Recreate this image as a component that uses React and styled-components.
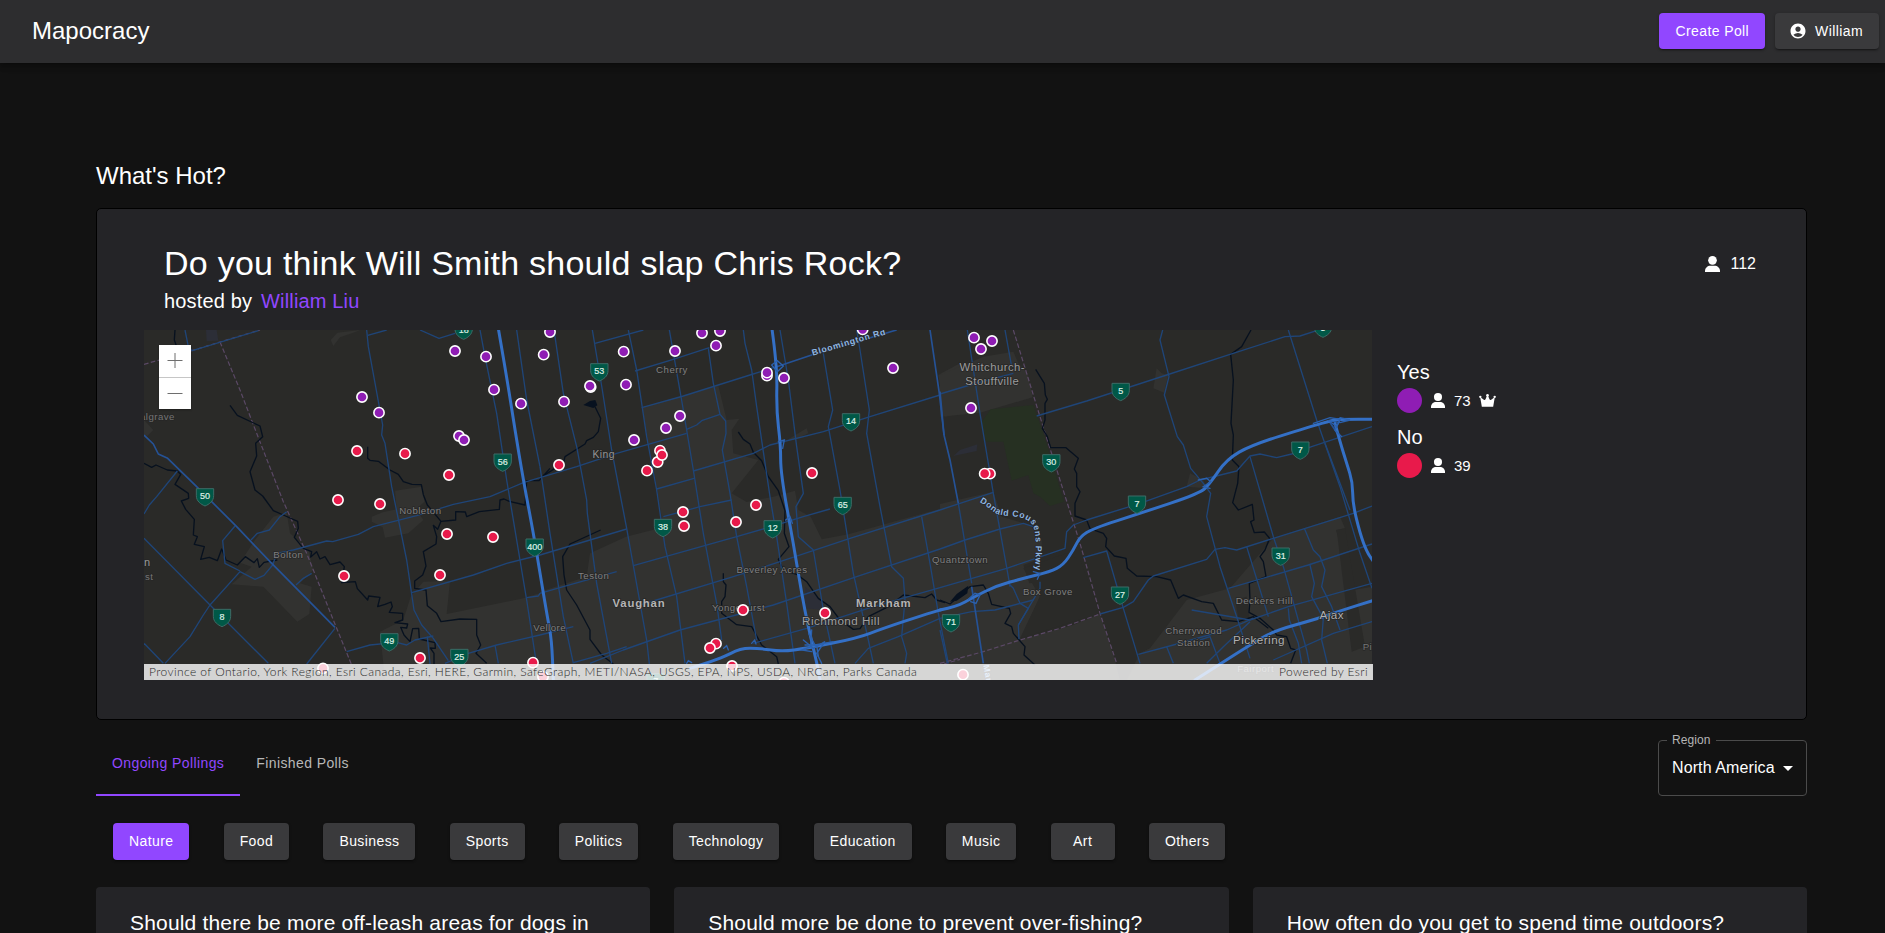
import React from "react";
import styled, { createGlobalStyle } from "styled-components";
import { MdAccountCircle, MdArrowDropDown } from "react-icons/md";

const GlobalStyle = createGlobalStyle`
  * { box-sizing: border-box; }
  html, body { margin: 0; height: 100%; overflow: hidden; background: #121212; }
  body { color: #fff; font-family: Arial, "Liberation Sans", sans-serif; }
`;

const Page = styled.div`
  height: 100vh;
  overflow: hidden;
  display: flex;
  flex-direction: column;
`;

const NavBar = styled.header`
  flex: none;
  height: 63px;
  display: flex;
  align-items: center;
  gap: 10px;
  padding: 0 6px 1px 32px;
  background: #2d2d2f;
  box-shadow: 0 2px 4px -1px rgba(0, 0, 0, 0.2), 0 4px 5px rgba(0, 0, 0, 0.14), 0 1px 10px rgba(0, 0, 0, 0.12);
`;

const Brand = styled.div`
  flex: 1;
  font-size: 24px;
  line-height: 32px;
`;

const Button = styled.button`
  display: inline-flex;
  align-items: center;
  justify-content: center;
  min-width: 64px;
  height: 36px;
  padding: 0 16px;
  border: 0;
  border-radius: 4px;
  color: #fff;
  background: ${(p) => (p.$primary ? "#9147ff" : "#3a3a3c")};
  font: 14px/24px Arial, "Liberation Sans", sans-serif;
  letter-spacing: 0.4px;
  white-space: nowrap;
  box-shadow: 0 2px 2px -1px rgba(0, 0, 0, 0.4), 0 1px 3px rgba(0, 0, 0, 0.25);
`;

const AccountButton = styled(Button)`
  gap: 8px;
  padding-left: 14px;
`;

const CategoryButton = styled(Button)`
  height: 37px;
  padding-bottom: 1px;
`;

const Content = styled.main`
  flex: none;
  padding: 97px 78px 0 96px;
`;

const SectionTitle = styled.h2`
  margin: 0;
  font-size: 24px;
  line-height: 32px;
  font-weight: 400;
`;

const HotCard = styled.section`
  height: 512px;
  margin-top: 16px;
  padding: 33px 49px 0 47px;
  background: #242427;
  border: 1px solid #000;
  border-radius: 5px;
`;

const HotHeader = styled.div`
  display: flex;
  justify-content: space-between;
  padding: 0 1px 0 20px;
`;

const Question = styled.h1`
  margin: 0;
  font-size: 34px;
  line-height: 42px;
  font-weight: 400;
  letter-spacing: 0.25px;
`;

const HostLine = styled.div`
  display: flex;
  gap: 9px;
  padding-top: 1px;
  font-size: 20px;
  line-height: 32px;
  letter-spacing: 0.15px;
`;

const Accent = styled.span`
  color: #9147ff;
`;

const Total = styled.div`
  display: flex;
  align-items: center;
  gap: 10px;
  height: 44px;
  font-size: 16px;
`;

const HotBody = styled.div`
  display: flex;
  margin-top: 13px;
`;

const MapFrame = styled.div`
  position: relative;
  width: 1229px;
  height: 350px;
  svg { display: block; }
`;

const ZoomPad = styled.div`
  position: absolute;
  left: 15px;
  top: 15px;
  width: 32px;
  height: 64px;
  background: #fff;
  display: flex;
  flex-direction: column;
  box-shadow: 0 1px 2px rgba(0, 0, 0, 0.3);
`;

const ZoomKey = styled.div`
  height: 32px;
  display: grid;
  place-items: center;
  & + & { border-top: 1px solid #c6c6c6; }
`;

const Attribution = styled.div`
  position: absolute;
  left: 0;
  right: 0;
  bottom: 0;
  height: 16px;
  padding: 0 5px;
  display: flex;
  justify-content: space-between;
  background: rgba(255, 255, 255, 0.8);
  color: #2a2a2a;
  font: 300 12px/16px Lato, sans-serif;
  letter-spacing: 0.4px;
`;

const Legend = styled.div`
  padding: 29px 0 0 24px;
`;

const LegendEntry = styled.div`
  height: 65px;
`;

const LegendName = styled.div`
  font-size: 20px;
  line-height: 26px;
  height: 29px;
`;

const LegendRow = styled.div`
  display: flex;
  align-items: center;
  font-size: 15px;
  line-height: 25px;
  svg + span { margin: 0 8px 0 9px; }
`;

const Swatch = styled.i`
  width: 25px;
  height: 25px;
  border-radius: 50%;
  margin-right: 9px;
  background: ${(p) => p.$color};
`;

const FilterBar = styled.div`
  display: flex;
  justify-content: space-between;
  align-items: flex-end;
  height: 76px;
`;

const Tabs = styled.div`
  display: flex;
`;

const Tab = styled.div`
  height: 62px;
  padding: 17px 16px 0;
  font-size: 14px;
  line-height: 24px;
  letter-spacing: 0.4px;
  color: ${(p) => (p.$active ? "#9147ff" : "#b8b8b8")};
  border-bottom: 2px solid ${(p) => (p.$active ? "#9147ff" : "transparent")};
`;

const Select = styled.fieldset`
  width: 149px;
  height: 63px;
  margin: 0;
  padding: 0 6px 0 8px;
  border: 1px solid #4b4b4b;
  border-radius: 4px;
  legend {
    padding: 0 5px;
    font-size: 12px;
    line-height: 14px;
    letter-spacing: 0.1px;
    color: #b5b5b5;
  }
`;

const SelectValue = styled.div`
  display: flex;
  align-items: center;
  justify-content: space-between;
  height: 24px;
  margin-top: 9px;
  padding-left: 5px;
  font-size: 16px;
  letter-spacing: 0.1px;
  white-space: nowrap;
`;

const Categories = styled.div`
  display: flex;
  gap: 34.25px;
  padding: 27px 0 0 17px;
`;

const PollGrid = styled.div`
  display: grid;
  grid-template-columns: repeat(3, 1fr);
  gap: 24px;
  margin-top: 27px;
`;

const PollCard = styled.article`
  height: 240px;
  padding: 20px 34px;
  background: #242427;
  border-radius: 4px;
  font-size: 21px;
  line-height: 32px;
  letter-spacing: 0.18px;
  white-space: nowrap;
`;

const Person = ({ size }) => (
  <svg width={size} height={size * 1.07} viewBox="0 0 45 48" fill="#fff">
    <circle cx="22.5" cy="13" r="13" />
    <path d="M0 48V45C0 35 8 29 16 29H29C37 29 45 35 45 45V48Z" />
  </svg>
);

const Crown = () => (
  <svg width="17" height="13" viewBox="0 0 50 39" fill="#fff">
    <path d="M8 38.5L3 9L14 17Q17 19 19 16L24 4H26L31 16Q33 19 36 17L47 9L42 38.5Z" />
    <circle cx="3.5" cy="8.5" r="3.5" />
    <circle cx="25" cy="4" r="4" />
    <circle cx="46.5" cy="8.5" r="3.5" />
  </svg>
);

/* The map is drawn in three sheets, three drawing units to a pixel. */
const SHEETS = [
  {
    x: 0,
    urban: [
      "572,60 592,38 660,30 640,38 600,52 580,78",
      "765,512 845,500 853,545 828,568 850,600 805,640 735,653 728,622 695,605 695,590 728,577 770,568",
      "275,793 335,740 300,728 345,660 400,590 440,578 450,640 505,690 520,750 480,790 515,800 508,882 472,905 370,800",
      "720,935 790,900 812,830 850,785 930,783 920,882 1150,835 1260,800 1260,1080 735,1080",
      "12,300 40,330 22,348 12,345",
    ],
    lake: ["198,30 230,30 235,62 200,64"],
    river: [
      "105,30 103,60 110,80",
      "270,256 292,286 360,318 368,350 347,370 350,408 330,455 345,510 368,528 400,572 430,585 473,604 475,625 463,652 490,685 515,695 512,711 530,695 540,717 555,710 570,734 600,726 613,740 605,788 646,785 652,806 683,840 686,828 720,832 713,860 735,853 753,846 757,860 748,877 788,880 788,900 765,908 803,912 800,924 782,922 792,945 810,965 818,926 836,925 838,957 885,968 886,985 871,984 882,1000 882,1032",
      "12,430 35,442 48,435 82,450 112,453 122,463 105,493 145,520 146,535 124,543 137,568 163,598 160,645 172,650 163,673 193,680 182,718 208,712 232,722 245,687 258,720 292,735 316,710 342,728 352,716 358,742 372,727 412,720",
      "683,380 683,415 690,421 715,424 750,450 775,463 790,485 816,493 844,494 850,524 862,555 903,604 947,600 947,575 976,576 980,590 1018,575 1078,568 1080,540 1092,537 1108,544 1155,555 1160,482 1197,482 1230,445",
      "903,604 893,628 880,616 890,650 888,672 850,695 858,738 848,765 824,783 824,805 858,810 862,857 890,880 903,905 960,897 1010,898 1010,945 1022,975 1008,1000 1040,1030",
    ],
    road: [
      "135,30 145,80 157,92 355,32",
      "680,30 685,80 728,315 725,345 735,370 755,500 800,720 822,870 845,915 880,955 925,1022",
      "683,46 740,30", "840,30 897,55 945,40",
      "1020,30 1035,110 1070,280 1100,480 1160,840 1190,1035",
      "1130,30 1160,240 1200,440",
      "12,582 28,555 50,530 112,453",
      "12,655 210,855 385,1030", "12,970 70,1030", "75,1030 150,950 190,885 210,855 300,755 345,778 372,766 398,735 410,700 460,690 560,663 578,665 655,643 700,620 830,587 940,553 1050,530 1150,488 1200,473",
      "285,618 248,662 255,730 300,753", "440,575 420,590 388,630 352,640 333,660", "468,795 490,775 515,760",
      "500,1032 585,925", "620,995 690,975 770,967 800,975 825,960 880,948",
      "815,818 1000,765 1100,730 1200,705",
      "915,1030 985,1000 1070,975 1200,945", "1065,975 1075,1030", "862,950 870,1032", "1160,833 1195,828 1200,820",
    ],
    major: ["12,345 40,372 55,402 83,415 170,500 290,620 390,725 585,922"],
    highway: ["1074,20 1100,170 1125,330 1150,480 1182,650 1200,760 1222,890 1235,960 1240,1080"],
    border: ["12,133 130,100 240,66 360,30", "240,66 300,210 350,340 430,545 500,700 580,900 635,1035"],
  },
  {
    x: 1200,
    urban: [
      "305,262 535,197 560,300 598,296 575,330 580,400 655,420 575,520 620,546 700,530 765,512 775,570 812,590 845,658 925,643 1260,550 1260,1080 0,1080 0,815 140,770 150,700 258,650 370,622 350,500",
      "745,358 800,325 805,340 760,360", "1195,165 1260,130 1260,280 1215,290",
    ],
    lake: ["795,800 835,830 855,870 795,865"],
    river: [
      "165,260 182,295 175,335 160,352 140,362 135,372 75,410 70,430 10,467",
      "182,630 90,672 68,710 72,765 80,810 110,855 150,930 150,958 185,1005 220,1032",
      "595,336 610,358 630,372 640,397 665,422 685,470 715,512 735,572 733,640 747,680 715,718 730,750 770,763 800,785 835,835 870,860 900,900 940,928 960,926 985,890 1045,860 1090,825 1155,833 1175,822 1190,840 1215,848",
      "550,760 550,785 558,795 555,830 545,845 545,880 590,914 635,920 665,975 710,1010 715,1032",
    ],
    ponds: ["130,255 150,243 166,240 172,256 160,264"],
    road: [
      "42,30 70,220 110,380 140,540 142,580 170,790 215,1030",
      "0,440 30,640 70,890 100,1030",
      "157,30 187,210 215,390 260,625 320,960 328,1032",
      "265,30 290,150 320,350 350,510 375,680 410,830 435,1030",
      "388,30 402,110 430,270 460,450 490,640 530,850 545,960",
      "505,85 520,190 540,283 557,303 558,340 547,390 570,520 590,650 620,800 650,960",
      "610,30 615,70 635,150 650,260 690,530 710,650 740,850 765,1030",
      "720,30 745,180 770,380 790,520 768,560 775,650 820,690 850,870 885,1030",
      "850,100 878,270 865,320 900,510 940,760 985,960 1000,1030",
      "950,30 960,90 988,270 980,340 1020,560 1055,740 1090,775 1095,840 1085,950 1100,1000 1095,1030",
      "1145,590 1170,730 1195,880 1225,1030",
      "165,70 310,30", "285,153 400,118 508,83",
      "305,263 430,228 630,165 710,140",
      "0,473 110,440 230,400 440,340", "440,328 470,315 485,302 540,283", "350,507 462,475", "460,453 640,400 690,375 850,335 990,290 1200,225",
      "0,705 260,627", "370,590 480,560 575,540", "280,737 590,650 700,618 790,590 870,567",
      "0,820 70,800 230,755", "300,855 580,770 720,725 930,655 1200,570",
      "0,945 100,920", "150,1030 250,990 420,930 700,855 950,770 1200,687", "100,1028 200,1000 260,980",
      "640,970 800,925 1000,860 1200,803", "945,1030 985,985 1075,950 1200,895",
    ],
    major: ["1170,30 1198,220 1212,345", "710,140 815,105 1070,30"],
    highway: [
      "695,20 712,140 709,270 722,375 722,460 760,670 795,880 832,1035 840,1080",
      "450,1045 545,1015 600,985 660,985 725,995 800,985 950,955 1030,925 1150,885 1204,869",
    ],
    thin: [
      "790,960 820,985 855,965 830,1000 845,1030", "815,930 812,980 785,990 815,995", "806,940 825,975 880,965", "795,975 830,975 835,1010", "695,135 712,122 730,138 712,155 695,135",
      "715,365 733,360 728,385", "440,1030 445,1022 455,1028", "551,985 560,977 565,990", "635,970 644,960 648,972", "737,600 750,590 757,610",
    ],
    border: ["1212,1032 1260,1018"],
  },
  {
    x: 2400,
    urban: [
      "0,165 130,110 220,95 235,130 262,160 278,232 120,278 0,290",
      "0,552 160,515 185,590 270,615 305,660 305,715 250,735 268,790 320,785 240,960 400,915 480,882 525,1020 540,1080 0,1080",
      "630,985 740,840 870,805 1000,655 1200,590 1215,625 1188,630 1240,810 1296,800 1296,1080 560,1080 600,1000",
      "640,205 650,145 665,160 685,165 672,218", "740,500 750,460 790,480 800,505",
    ],
    dark: ["250,745 380,700 420,720 480,880 240,955 300,830", "1190,630 1215,625 1275,980 1235,995", "885,840 920,830 930,900 895,895"],
    park: ["125,305 152,268 280,255 310,340 372,545 330,558 300,530 280,520 265,465 215,482 190,365 138,365"],
    lake: ["40,408 60,390 112,373 110,393"],
    river: [
      "933,30 905,80 872,103 880,180 873,310 880,345 877,420 897,440 893,490 878,548 895,570 937,553 942,600 932,605 943,638 973,636 989,655 975,690 960,710 970,725 978,770 928,790 930,840 927,877 960,895 1000,930 1010,945 1040,950 1052,985 1067,990 1052,1030",
      "287,148 313,190 316,225 322,238 315,250 315,300 307,325 322,350 332,383 378,383 415,415 403,447 410,460 410,500 420,515 405,550 405,588 440,600 450,626 490,640 500,655 497,680 523,708 558,715 562,745 590,768 650,770 692,780 715,835 730,825 785,845 820,850 845,900 895,905 940,890 985,925",
      "0,840 30,852 90,800 130,795 145,820 155,853 208,865 212,880 195,910 215,920 220,940 255,980 252,1005 285,1035",
    ],
    ponds: ["30,845 50,822 85,797 82,820 50,842"],
    road: [
      "82,30 120,280 160,520 205,770 210,800", "195,30 215,140",
      "0,222 100,192 220,160",
      "290,288 440,243 680,165 870,103 1035,50 1080,48 1130,32",
      "668,30 660,60 687,170 673,225 712,350 730,375 752,445 790,490 812,520 800,590 840,740 895,905 930,1015",
      "1045,30 1130,300 1200,500 1260,700 1296,805",
      "0,570 60,550 160,517", "0,687 75,660 180,627 250,610 280,620", "0,803 200,745 375,685 380,635 400,615 440,600 600,550 740,500 780,480 890,453 930,408 960,402 1010,413 1055,402 1115,380 1296,320",
      "0,895 95,875 165,870 280,840", "55,550 95,790", "0,930 22,1030", "205,790 220,805 240,850 265,865 235,915 237,958", "300,785 300,805 235,915",
      "430,713 500,693 550,865 600,1030", "480,882 550,862 580,845 625,780 640,768 800,718 825,688 855,683 890,690 1000,655 1240,580 1296,558",
      "930,410 1000,650 1030,740 1100,990 1108,1030", "865,805 1105,735 1296,672", "755,870 930,900 1045,860 1296,790",
      "920,680 985,890", "1093,625 1120,690 1140,710 1155,750 1145,800 1175,860 1200,930", "1110,735 1123,790 1115,830 1150,895 1145,960 1162,1030",
      "595,1003 700,975 860,930 940,895", "680,980 700,1030", "800,1030 850,980 930,905", "780,960 810,950 840,1030",
      "1000,1020 1180,940 1296,905", "1045,865 1048,900 1075,970 1085,1030", "1155,370 1230,570",
    ],
    major: ["0,215 12,345 30,420 55,550", "95,800 130,1030", "1165,300 1195,345"],
    highway: [
      "0,870 50,860 100,832 170,797 250,775 330,755 370,735 400,690 420,650 460,625 600,580 780,520 810,490 860,418 935,375 1110,320 1180,300 1200,298 1310,298",
      "1185,310 1200,365 1220,430 1238,487 1238,550 1260,640 1280,695 1300,724",
      "765,1080 840,1032 930,975 1000,933 1130,897 1200,873 1310,838",
    ],
    thin: [
      "1120,310 1170,293 1200,298 1190,320 1175,308", "1165,302 1200,308 1230,300 1200,293", "85,838 105,820 120,825 108,850 92,845", "775,480 800,475 812,485 790,500 810,505", "280,755 300,760 292,778", "1200,300 1185,330 1205,350",
    ],
    border: ["220,30 300,290 420,670 480,880 530,1030", "0,1030 130,995 240,960 360,925 480,882"],
  },
];

const PLACES = [
  [0, 299, "algrave", "#757575", 29, "start"],
  [12, 737, "n", "#9a9a9a", 33, "start"],
  [15, 780, "st", "#757575", 29, "start"],
  [841, 581, "Nobleton"], [445, 714, "Bolton"], [1229, 933, "Vellore"],
  [1596, 160, "Cherry"], [1391, 413, "King", "#959595", 31], [1361, 777, "Teston"],
  [1896, 759, "Beverley Acres"], [1796, 872, "Yongehurst"],
  [2103, 914, "Richmond Hill", "#a0a0a0", 35], [2460, 730, "Quantztown"],
  [2557, 153, "Whitchurch-", "#9c9c9c", 34], [2557, 196, "Stouffville", "#9c9c9c", 34],
  [2724, 826, "Box Grove"], [3373, 851, "Deckers Hill"],
  [3161, 943, "Cherrywood"], [3161, 978, "Station"],
  [3357, 973, "Pickering", "#b0b0b0", 35], [3575, 896, "Ajax", "#b0b0b0", 35],
  [3668, 991, "Pi", "#757575", 29, "start"], [3347, 1056, "Fairport"],
];

const CITIES = [[1497, 860, "Vaughan"], [2231, 860, "Markham"]];

const SHIELDS = [
  [971, 30, "18"], [195, 530, "50"], [246, 892, "8"], [748, 965, "49"], [958, 1012, "25"], [1088, 426, "56"],
  [1184, 681, "400"], [1378, 155, "53"], [1569, 622, "38"], [1898, 626, "12"], [2108, 556, "65"], [2133, 305, "14"],
  [2433, 908, "71"], [2942, 214, "5"], [2734, 428, "30"], [2991, 552, "7"], [3481, 390, "7"], [3422, 708, "31"],
  [2940, 825, "27"], [3549, 24, "5"], [1547, 1085, "7"],
];

const YES_VOTES = [
  [1230, 36], [945, 93], [1038, 110], [1211, 104], [1062, 209], [1143, 251], [666, 231], [717, 278], [957, 348], [972, 360],
  [1451, 95], [1605, 93], [1686, 39], [1740, 33], [1728, 77], [1352, 201], [1350, 198], [1458, 194], [1272, 245], [1620, 288],
  [1578, 324], [1482, 360], [1881, 167], [1881, 158], [1932, 174], [2168, 28], [2259, 144], [2502, 53], [2556, 63], [2523, 87], [2493, 264],
];

const NO_VOTES = [
  [651, 393], [795, 401], [927, 465], [594, 540], [720, 552], [921, 642], [1059, 651], [900, 765], [612, 768], [840, 1014],
  [1179, 1028], [549, 1045], [1209, 1070], [1257, 435], [1560, 392], [1553, 426], [1566, 405], [1521, 452], [1629, 576], [1632, 618],
  [1848, 555], [1788, 606], [2016, 459], [1809, 870], [2055, 879], [1728, 971], [1710, 984], [1776, 1038], [1932, 1088], [2550, 461], [2534, 461], [2469, 1064],
];

/* Rounds the corners of a point list by curving between segment midpoints. */
const smooth = (points) => {
  const p = points.split(" ").map((pair) => pair.split(",").map(Number));
  let d = `M${p[0]}`;
  for (let i = 1; i < p.length - 1; i += 1) {
    d += `Q${p[i]} ${(p[i][0] + p[i + 1][0]) / 2},${(p[i][1] + p[i + 1][1]) / 2}`;
  }
  return `${d}L${p[p.length - 1]}`;
};

const Lines = ({ of = [], ...rest }) => of.map((points) => <polyline key={points} points={points} fill="none" {...rest} />);
const Curves = ({ of = [], ...rest }) => of.map((points) => <path key={points} d={smooth(points)} fill="none" {...rest} />);
const Areas = ({ of = [], fill }) => of.map((points) => <polygon key={points} points={points} fill={fill} />);

const PollMap = () => (
  <svg width="1228" height="350" viewBox="12 30 3684 1050" fontFamily='Arial, "Liberation Sans", sans-serif'>
    <defs>
      <path id="cousens" d="M2518 546C2545 560 2555 575 2575 583C2610 593 2640 582 2672 608C2694 630 2686 690 2684 800" />
      <path id="bloomington" d="M2018 107L2290 28" />
    </defs>
    <rect x="12" y="30" width="3684" height="1050" fill="#2a2a28" />
    {SHEETS.map((s) => (
      <g key={s.x} transform={`translate(${s.x} 0)`} strokeLinejoin="round">
        <Areas of={s.urban} fill="#323230" />
        <Areas of={s.dark} fill="#2a2a28" />
        <Areas of={s.park} fill="#263022" />
        <Areas of={s.lake} fill="#2c2e37" />
      </g>
    ))}
    {SHEETS.map((s) => (
      <g key={s.x} transform={`translate(${s.x} 0)`} strokeLinejoin="round">
        <Lines of={s.border} stroke="#5b4966" strokeWidth="3.6" strokeDasharray="14 7" />
        <Lines of={s.river} stroke="#07111f" strokeWidth="4" />
        <Areas of={s.ponds} fill="#07111f" />
        <Lines of={s.road} stroke="#1f4578" strokeWidth="4" />
        <Lines of={s.major} stroke="#255296" strokeWidth="5" />
      </g>
    ))}
    {SHEETS.map((s) => (
      <g key={s.x} transform={`translate(${s.x} 0)`} strokeLinecap="round">
        <Curves of={s.highway} stroke="#3470c6" strokeWidth="9" />
        <Lines of={s.thin} stroke="#2b61ae" strokeWidth="4" />
      </g>
    ))}
    <g stroke="#262626" strokeWidth="4" paintOrder="stroke" letterSpacing="1.4">
      {PLACES.map(([x, y, name, fill = "#808080", size = 29, anchor = "middle"]) => (
        <text key={name + y} x={x} y={y} fontSize={size} fill={fill} textAnchor={anchor}>{name}</text>
      ))}
      {CITIES.map(([x, y, name]) => (
        <text key={name} x={x} y={y} fontSize="34" fontWeight="700" fill="#b4b4b4" textAnchor="middle" letterSpacing="2.4">{name}</text>
      ))}
      <g fill="#8fb6e2" fontSize="26" fontWeight="700" letterSpacing="2">
        <text><textPath href="#cousens">Donald Cousens Pkwy</textPath></text>
        <text><textPath href="#bloomington">Bloomington Rd</textPath></text>
        <text transform="translate(2530 1036) rotate(80)">Mar</text>
      </g>
    </g>
    {SHIELDS.map(([x, y, label]) => (
      <g key={label + x} transform={`translate(${x} ${y + 1})`}>
        <path d="M-26-25H26V-4C26 13 12 22 0 27C-12 22-26 13-26-4Z" fill="#005847" stroke="#3d6b66" strokeWidth="3" />
        <text y="7" fontSize="27" fill="#dcefe5" stroke="#dcefe5" strokeWidth=".6" textAnchor="middle">{label}</text>
      </g>
    ))}
    <g stroke="#fff" strokeWidth="4.8">
      {YES_VOTES.map(([x, y]) => <circle key={`${x}-${y}`} cx={x} cy={y} r="15.4" fill="#8f1db4" />)}
      {NO_VOTES.map(([x, y]) => <circle key={`${x}-${y}`} cx={x} cy={y} r="15.4" fill="#e81a4b" />)}
    </g>
  </svg>
);

const CATEGORIES = ["Nature", "Food", "Business", "Sports", "Politics", "Technology", "Education", "Music", "Art", "Others"];
const POLLS = [
  "Should there be more off-leash areas for dogs in",
  "Should more be done to prevent over-fishing?",
  "How often do you get to spend time outdoors?",
];

export default function App() {
  return (
    <Page>
      <GlobalStyle />
      <NavBar>
        <Brand>Mapocracy</Brand>
        <Button $primary>Create Poll</Button>
        <AccountButton><MdAccountCircle size={18} />William</AccountButton>
      </NavBar>
      <Content>
        <SectionTitle>What's Hot?</SectionTitle>
        <HotCard>
          <HotHeader>
            <div>
              <Question>Do you think Will Smith should slap Chris Rock?</Question>
              <HostLine>hosted by <Accent>William Liu</Accent></HostLine>
            </div>
            <Total><Person size={15} />112</Total>
          </HotHeader>
          <HotBody>
            <MapFrame>
              <PollMap />
              <ZoomPad>
                <ZoomKey><svg width="16" height="16" stroke="#6e6e6e"><path d="M.5 7.5H15.5M8 0V15" /></svg></ZoomKey>
                <ZoomKey><svg width="16" height="16" stroke="#6e6e6e"><path d="M.5 7.5H15.5" /></svg></ZoomKey>
              </ZoomPad>
              <Attribution>
                <span>Province of Ontario, York Region, Esri Canada, Esri, HERE, Garmin, SafeGraph, METI/NASA, USGS, EPA, NPS, USDA, NRCan, Parks Canada</span>
                <span>Powered by Esri</span>
              </Attribution>
            </MapFrame>
            <Legend>
              <LegendEntry>
                <LegendName>Yes</LegendName>
                <LegendRow><Swatch $color="#8f1db4" /><Person size={14} /><span>73</span><Crown /></LegendRow>
              </LegendEntry>
              <LegendEntry>
                <LegendName>No</LegendName>
                <LegendRow><Swatch $color="#e81a4b" /><Person size={14} /><span>39</span></LegendRow>
              </LegendEntry>
            </Legend>
          </HotBody>
        </HotCard>
        <FilterBar>
          <Tabs>
            <Tab $active>Ongoing Pollings</Tab>
            <Tab>Finished Polls</Tab>
          </Tabs>
          <Select>
            <legend>Region</legend>
            <SelectValue>North America<MdArrowDropDown size={24} /></SelectValue>
          </Select>
        </FilterBar>
        <Categories>
          {CATEGORIES.map((name, i) => <CategoryButton key={name} $primary={i === 0}>{name}</CategoryButton>)}
        </Categories>
        <PollGrid>
          {POLLS.map((title) => <PollCard key={title}>{title}</PollCard>)}
        </PollGrid>
      </Content>
    </Page>
  );
}
